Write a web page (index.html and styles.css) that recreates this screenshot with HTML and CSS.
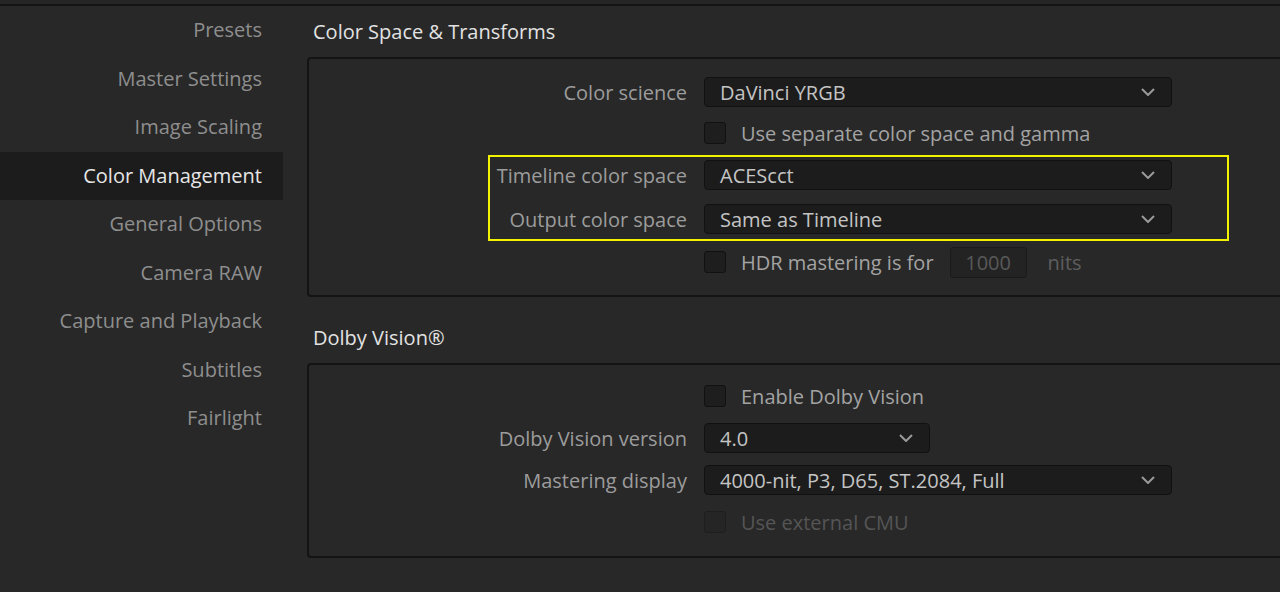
FILE: index.html
```html
<!DOCTYPE html>
<html lang="en">
<head>
    <meta charset="UTF-8">
    <meta name="viewport" content="width=device-width, initial-scale=1.0">
    <title>Project Settings</title>
    <link rel="stylesheet" href="styles.css">
</head>
<body>
    <div class="top-strip"></div>
    <div class="settings">
        <ul class="nav">
            <li>Presets</li>
            <li>Master Settings</li>
            <li>Image Scaling</li>
            <li class="active">Color Management</li>
            <li>General Options</li>
            <li>Camera RAW</li>
            <li>Capture and Playback</li>
            <li>Subtitles</li>
            <li>Fairlight</li>
        </ul>

        <div class="content">
            <section class="group">
                <h3 class="group-title">Color Space &amp; Transforms</h3>
                <div class="panel panel-color">
                    <div class="row row-first">
                        <label class="row-label">Color science</label>
                        <div class="select"><span>DaVinci YRGB</span><svg class="chevron" viewBox="0 0 14 8"><path d="M1 1l6 6 6-6"/></svg></div>
                    </div>
                    <div class="row">
                        <span class="row-label"></span>
                        <span class="check"></span>
                        <span class="check-text">Use separate color space and gamma</span>
                    </div>
                    <div class="highlight">
                        <div class="row">
                            <label class="row-label">Timeline color space</label>
                            <div class="select"><span>ACEScct</span><svg class="chevron" viewBox="0 0 14 8"><path d="M1 1l6 6 6-6"/></svg></div>
                        </div>
                        <div class="row">
                            <label class="row-label">Output color space</label>
                            <div class="select"><span>Same as Timeline</span><svg class="chevron" viewBox="0 0 14 8"><path d="M1 1l6 6 6-6"/></svg></div>
                        </div>
                    </div>
                    <div class="row">
                        <span class="row-label"></span>
                        <span class="check"></span>
                        <span class="check-text">HDR mastering is for</span>
                        <span class="nits-input">1000</span>
                        <span class="unit">nits</span>
                    </div>
                </div>
            </section>

            <section class="group">
                <h3 class="group-title">Dolby Vision®</h3>
                <div class="panel panel-dolby">
                    <div class="row">
                        <span class="row-label"></span>
                        <span class="check"></span>
                        <span class="check-text">Enable Dolby Vision</span>
                    </div>
                    <div class="row">
                        <label class="row-label">Dolby Vision version</label>
                        <div class="select select-short"><span>4.0</span><svg class="chevron" viewBox="0 0 14 8"><path d="M1 1l6 6 6-6"/></svg></div>
                    </div>
                    <div class="row">
                        <label class="row-label">Mastering display</label>
                        <div class="select"><span>4000-nit, P3, D65, ST.2084, Full</span><svg class="chevron" viewBox="0 0 14 8"><path d="M1 1l6 6 6-6"/></svg></div>
                    </div>
                    <div class="row disabled">
                        <span class="row-label"></span>
                        <span class="check"></span>
                        <span class="check-text">Use external CMU</span>
                    </div>
                </div>
            </section>
        </div>
    </div>
</body>
</html>
```

FILE: styles.css
```css
body {
    font-family: "Open Sans", "Noto Sans", sans-serif;
    font-size: 20px;
    margin: 0;
    padding: 0;
    background-color: #282828;
    color: #9c9c9c;
    height: 100vh;
    overflow: hidden;
}
.top-strip {
    height: 4px;
    background-color: #252525;
    border-bottom: 2px solid #141414;
}
.settings {
    display: flex;
}
.nav {
    list-style: none;
    margin: 0;
    padding: 0;
    width: 283px;
    flex-shrink: 0;
}
.nav li {
    height: 48.5px;
    line-height: 48.5px;
    text-align: right;
    padding-right: 21px;
    color: #8e8e8e;
    white-space: nowrap;
}
.nav li.active {
    background-color: #1c1c1c;
    color: #e6e6e6;
}
.content {
    flex: 1;
    padding-left: 24px;
    padding-top: 1px;
}
.group + .group {
    margin-top: 16px;
}
.group-title {
    margin: 0;
    height: 50px;
    line-height: 50px;
    padding-left: 6px;
    font-size: 20px;
    font-weight: normal;
    color: #e2e2e2;
}
.panel {
    border: 2px solid #141414;
    border-right: none;
    border-radius: 4px 0 0 4px;
    display: flex;
    flex-direction: column;
    gap: 12px;
}
.panel-color {
    padding: 18px 0 18px;
}
.panel-dolby {
    padding: 16px 0 19px;
}
.row {
    display: flex;
    align-items: center;
    height: 30px;
}
.row-first {
    margin-bottom: -1px;
}
.row-label {
    width: 378px;
    flex-shrink: 0;
    text-align: right;
    margin-right: 17px;
    color: #9c9c9c;
    white-space: nowrap;
}
.select {
    width: 468px;
    height: 30px;
    box-sizing: border-box;
    background-color: #1c1c1c;
    border: 1px solid #111;
    border-radius: 4px;
    display: flex;
    align-items: center;
    justify-content: space-between;
    padding: 0 16px 0 15px;
    color: #c4c4c4;
}
.select-short {
    width: 226px;
}
.chevron {
    width: 14px;
    height: 8px;
    fill: none;
    stroke: #9a9a9a;
    stroke-width: 2;
}
.check {
    width: 22px;
    height: 22px;
    box-sizing: border-box;
    background-color: #1e1e1e;
    border: 1px solid #111;
    border-radius: 3px;
    margin-right: 15px;
}
.check-text {
    color: #a3a3a3;
}
.nits-input {
    width: 77px;
    height: 31px;
    box-sizing: border-box;
    margin-left: 16px;
    border: 1px solid #1a1a1a;
    background-color: #232323;
    border-radius: 3px;
    text-align: center;
    line-height: 29px;
    color: #595959;
}
.unit {
    margin-left: 21px;
    color: #5e5e5e;
}
.highlight {
    position: relative;
    display: flex;
    flex-direction: column;
    gap: 14px;
    margin-bottom: 1px;
}
/* annotation frame around the two colour space rows */
.highlight::after {
    content: "";
    position: absolute;
    left: 179px;
    top: -5px;
    width: 741px;
    height: 86px;
    box-sizing: border-box;
    border: 2px solid #f2f200;
    pointer-events: none;
}
.disabled .check {
    background-color: #252525;
    border-color: #1e1e1e;
}
.disabled .check-text {
    color: #555;
}
```
